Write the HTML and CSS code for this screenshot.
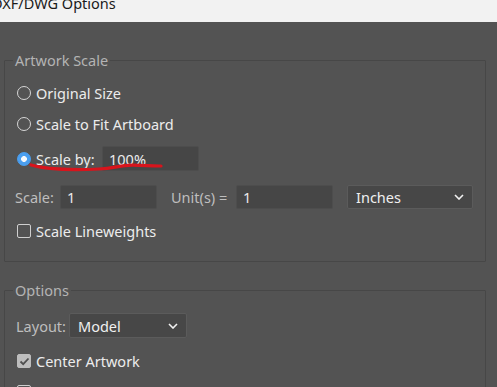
FILE: index.html
```html
<!DOCTYPE html>
<html lang="en">
<head>
    <meta charset="UTF-8">
    <title>DXF/DWG Options</title>
    <link rel="stylesheet" href="styles.css">
</head>
<body>
<div class="titlebar">
    <span class="title">DXF/DWG Options</span>
</div>

<div class="dialog">
    <fieldset class="group group-scale">
        <legend>Artwork Scale</legend>

        <div class="option first">
            <span class="radio"></span>
            <span>Original Size</span>
        </div>
        <div class="option">
            <span class="radio"></span>
            <span>Scale to Fit Artboard</span>
        </div>
        <div class="option scale-by">
            <span class="radio checked"></span>
            <span class="by-label">Scale by:</span>
            <span class="field">100%</span>
            <!-- red marker stroke drawn over the row -->
            <svg class="scribble" width="140" height="12" viewBox="0 0 140 12">
                <path d="M2 2 C 14 5.5, 40 7.5, 70 6 C 86 5, 92 2, 104 2.2 C 116 2.4, 124 3.2, 132 3" fill="none" stroke="#d8141c" stroke-width="3.2" stroke-linecap="round"/>
            </svg>
        </div>

        <div class="row scale-row">
            <span class="label scale-label">Scale:</span>
            <span class="field">1</span>
            <span class="label units">Unit(s) =</span>
            <span class="field">1</span>
            <span class="select inches">
                Inches
                <svg class="chevron" width="10" height="6" viewBox="0 0 10 6"><path d="M1 1 L5 5 L9 1" fill="none" stroke="#f2f2f2" stroke-width="1.6"/></svg>
            </span>
        </div>

        <div class="option lineweights">
            <span class="check"></span>
            <span>Scale Lineweights</span>
        </div>
    </fieldset>

    <fieldset class="group group-options">
        <legend>Options</legend>

        <div class="row layout-row">
            <span class="label layout-label">Layout:</span>
            <span class="select model">
                Model
                <svg class="chevron" width="10" height="6" viewBox="0 0 10 6"><path d="M1 1 L5 5 L9 1" fill="none" stroke="#f2f2f2" stroke-width="1.6"/></svg>
            </span>
        </div>

        <div class="option center">
            <span class="check checked">
                <svg width="11" height="9" viewBox="0 0 11 9"><path d="M1.5 4.5 L4.2 7.2 L9.5 1.5" fill="none" stroke="#4f4f4f" stroke-width="1.8"/></svg>
            </span>
            <span>Center Artwork</span>
        </div>
        <div class="option">
            <span class="check"></span>
        </div>
    </fieldset>
</div>
</body>
</html>
```

FILE: styles.css
```css
body {
    margin: 0;
    background-color: #535353;
    font-family: "Noto Sans", "Open Sans", sans-serif;
    font-size: 14.5px;
    color: #ececec;
    overflow: hidden;
}

.titlebar {
    height: 22px;
    background-color: #f2f2f2;
    overflow: hidden;
}

.title {
    display: block;
    margin: -7px 0 0 -8px;
    font-size: 14.5px;
    line-height: 20px;
    color: #1a1a1a;
}

.group {
    margin: 28px 11px 0 4px;
    padding: 0 12px 20px 12px;
    border: 1px solid #474747;
    border-radius: 1px;
}

.group legend {
    margin-left: -4px;
    padding: 0 2px;
    line-height: 20px;
    color: #b4b4b4;
}

.group-options {
    margin-top: 18px;
}

.option {
    display: flex;
    align-items: center;
    gap: 5px;
    height: 20px;
    margin-top: 11px;
}

.option.first {
    margin-top: 13px;
}

.radio {
    width: 12px;
    height: 12px;
    border: 1.5px solid #d6d6d6;
    border-radius: 50%;
    flex: none;
}

.radio.checked {
    border-color: #4a9ff0;
    background-image: radial-gradient(circle, #f4f8fc 0, #f4f8fc 2.6px, #4a9ff0 3.2px);
}

.check {
    width: 12px;
    height: 12px;
    border: 1.5px solid #cfcfcf;
    border-radius: 2px;
    flex: none;
    display: flex;
    align-items: center;
    justify-content: center;
}

.check.checked {
    background-color: #bdbdbd;
    border-color: #bdbdbd;
}

.field {
    display: flex;
    align-items: center;
    box-sizing: border-box;
    width: 97px;
    height: 24px;
    padding-left: 6px;
    background-color: #464646;
    border: 1px solid #4d4d4d;
    border-radius: 2px;
    color: #ececec;
    flex: none;
}

.scale-by {
    position: relative;
    height: 25px;
    margin-top: 12px;
}

.by-label {
    width: 61px;
}

.scale-by .field {
    height: 25px;
}

.scribble {
    position: absolute;
    left: 12px;
    top: 17px;
}

.row {
    display: flex;
    align-items: center;
    height: 24px;
    margin-left: -2px;
}

.scale-row {
    margin-top: 14px;
}

.label {
    color: #bebebe;
    flex: none;
}

.scale-label {
    width: 45px;
}

.units {
    width: 65px;
    margin-left: 14px;
}

.layout-label {
    width: 53px;
}

.select {
    display: flex;
    align-items: center;
    justify-content: space-between;
    box-sizing: border-box;
    height: 24px;
    padding: 0 8px 0 8px;
    background-color: #474747;
    border: 1px solid #5b5b5b;
    border-radius: 2px;
    color: #f0f0f0;
    flex: none;
}

.inches {
    width: 126px;
    margin-left: 14px;
}

.model {
    width: 118px;
    height: 25px;
}

.chevron {
    flex: none;
}

.lineweights {
    margin-top: 12px;
}

.layout-row {
    height: 25px;
    margin-top: 13px;
    margin-left: -1px;
}

.center {
    margin-top: 13px;
}
```
